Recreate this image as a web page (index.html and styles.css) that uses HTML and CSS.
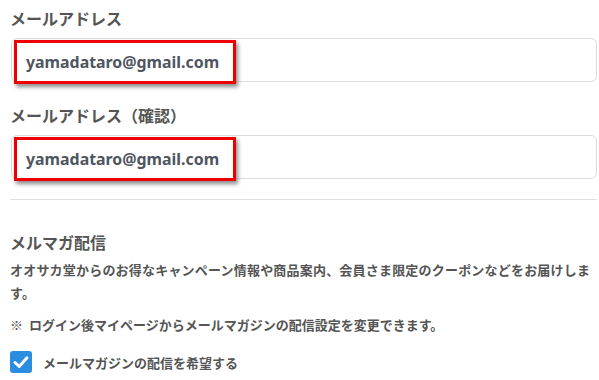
FILE: index.html
```html
<!DOCTYPE html>
<html lang="ja">
<head>
<meta charset="utf-8">
<link rel="stylesheet" href="styles.css">
</head>
<body>
<div class="form">
  <div class="field">
    <div class="label">メールアドレス</div>
    <div class="input"><span class="mark">yamadataro@gmail.com</span></div>
  </div>
  <div class="field">
    <div class="label">メールアドレス（確認）</div>
    <div class="input"><span class="mark">yamadataro@gmail.com</span></div>
  </div>
  <div class="divider"></div>
  <div class="section">
    <div class="heading">メルマガ配信</div>
    <p class="desc">オオサカ堂からのお得なキャンペーン情報や商品案内、会員さま限定のクーポンなどをお届けします。</p>
    <p class="note">※&nbsp; ログイン後マイページからメールマガジンの配信設定を変更できます。</p>
    <label class="check">
      <span class="box"><svg viewBox="0 0 22 22" width="22" height="22"><path d="M5 11.5 L9.2 15.5 L17 6.8" fill="none" stroke="#fff" stroke-width="3" stroke-linecap="round" stroke-linejoin="round"/></svg></span>
      <span class="check-text">メールマガジンの配信を希望する</span>
    </label>
  </div>
</div>
</body>
</html>
```
FILE: styles.css
```css
html, body {
  margin: 0;
  padding: 0;
  background: #fff;
}
body {
  font-family: "Noto Sans CJK JP", "Noto Sans", sans-serif;
  color: #4d4d4d;
}
.form {
  padding: 6px 2px 0 10px;
}
.field {
  display: flex;
  flex-direction: column;
}
.label {
  font-size: 16px;
  font-weight: 700;
  line-height: 24px;
  color: #555;
}
.field + .field .label {
  margin-top: 21px;
}
.input {
  margin-top: 8px;
  height: 42px;
  border: 1px solid #dcdcdc;
  border-radius: 6px;
  display: flex;
  align-items: center;
  margin-left: 1px;
}
.mark {
  box-sizing: border-box;
  height: 44px;
  margin-top: 3px;
  margin-left: 2px;
  border: 3px solid #ee0000;
  box-shadow: 2px 3px 4px rgba(0,0,0,0.45);
  padding: 0 14px 0 9px;
  display: flex;
  align-items: center;
  font-family: "Noto Sans", "Noto Sans CJK JP", sans-serif;
  font-size: 15.9px;
  font-weight: 700;
  color: #4f5560;
  background: #fff;
}
.divider {
  margin-top: 20px;
  border-top: 1px solid #e0e0e0;
}
.section {
  padding-top: 30px;
}
.heading {
  font-size: 16px;
  font-weight: 700;
  line-height: 24px;
  color: #555;
}
.desc {
  margin: 4px 0 0;
  font-size: 13px;
  letter-spacing: 0.2px;
  font-weight: 700;
  line-height: 23px;
  color: #555;
}
.note {
  margin: 9px 0 0;
  font-size: 13px;
  letter-spacing: 0;
  font-weight: 700;
  line-height: 23px;
  color: #555;
}
.check {
  display: flex;
  align-items: center;
  margin-top: 15px;
  gap: 11px;
}
.box {
  width: 22px;
  height: 22px;
  border-radius: 3px;
  background: #2b8de0;
  display: flex;
}
.check-text {
  font-size: 13px;
  font-weight: 700;
  color: #555;
}
```
